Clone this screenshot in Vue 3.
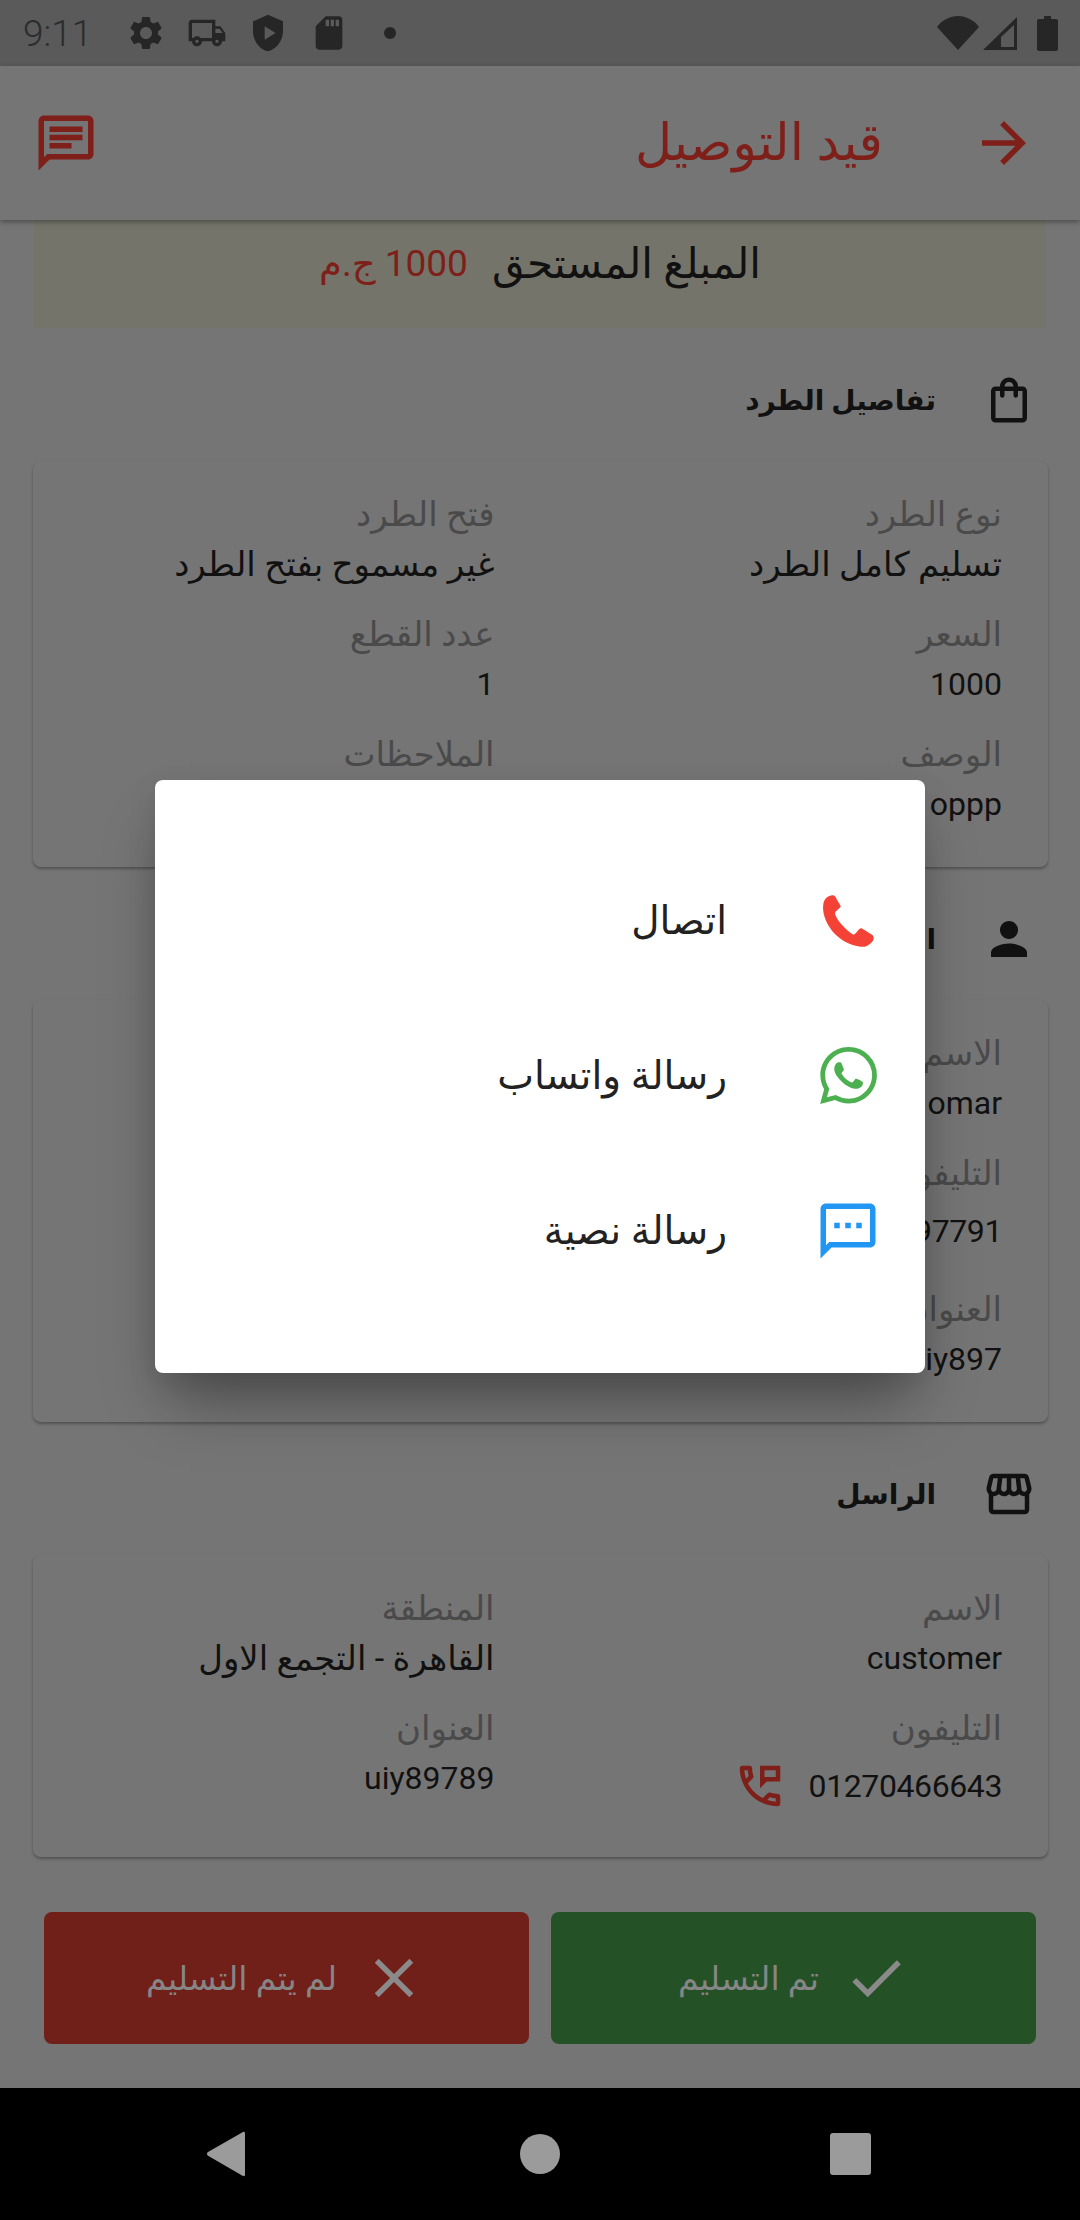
<script setup>
// colours are the dimmed ones as seen behind the dialog
const packageRows = [
  [
    { label: "نوع الطرد", value: "تسليم كامل الطرد" },
    { label: "فتح الطرد", value: "غير مسموح بفتح الطرد" },
  ],
  [
    { label: "السعر", value: "1000", latin: true },
    { label: "عدد القطع", value: "1", latin: true },
  ],
  [
    { label: "الوصف", value: "oppp", latin: true },
    { label: "الملاحظات", value: "-", latin: true },
  ],
];
const receiverRows = [
  [
    { label: "الاسم", value: "omar", latin: true },
    { label: "المنطقة", value: "القاهرة" },
  ],
  [
    { label: "التليفون", value: "01270497791", latin: true, phone: true },
    { label: "العنوان", value: "-", latin: true },
  ],
  [
    { label: "العنوان", value: "uiy897", latin: true },
    { label: "الملاحظات", value: "-", latin: true },
  ],
];
const senderRows = [
  [
    { label: "الاسم", value: "customer", latin: true },
    { label: "المنطقة", value: "القاهرة - التجمع الاول" },
  ],
  [
    { label: "التليفون", value: "01270466643", latin: true, phone: true },
    { label: "العنوان", value: "uiy89789", latin: true },
  ],
];
const sections = [
  { title: "تفاصيل الطرد", icon: "bag", rows: packageRows },
  { title: "المستلم", icon: "person", rows: receiverRows },
  { title: "الراسل", icon: "store", rows: senderRows },
];
const iconPaths = {
  bag: "M18 6h-2c0-2.21-1.79-4-4-4S8 3.79 8 6H6c-1.1 0-2 .9-2 2v12c0 1.1.9 2 2 2h12c1.1 0 2-.9 2-2V8c0-1.1-.9-2-2-2zm-6-2c1.1 0 2 .9 2 2h-4c0-1.1.9-2 2-2zm6 16H6V8h2v2c0 .55.45 1 1 1s1-.45 1-1V8h4v2c0 .55.45 1 1 1s1-.45 1-1V8h2v12z",
  person: "M12 12c2.21 0 4-1.79 4-4s-1.79-4-4-4-4 1.79-4 4 1.79 4 4 4zm0 2c-2.67 0-8 1.34-8 4v2h16v-2c0-2.66-5.33-4-8-4z",
  store: "M21.9 8.89l-1.05-4.37c-.22-.9-1-1.52-1.91-1.52H5.05c-.9 0-1.69.63-1.9 1.52L2.1 8.89c-.24 1.02-.02 2.06.62 2.88.08.11.19.19.28.29V19c0 1.1.9 2 2 2h14c1.1 0 2-.9 2-2v-6.94c.09-.09.2-.18.28-.28.64-.82.87-1.87.62-2.89zm-2.99-3.9l1.05 4.37c.1.42.01.84-.25 1.17-.14.18-.44.47-.94.47-.61 0-1.14-.49-1.21-1.14L16.98 5l1.93-.01zM13 5h1.96l.54 4.52c.05.39-.07.78-.33 1.07-.22.26-.54.41-.95.41-.67 0-1.22-.59-1.22-1.31V5zM8.49 9.52L9.04 5H11v4.69c0 .72-.55 1.31-1.29 1.31-.34 0-.65-.15-.89-.41-.25-.29-.37-.68-.33-1.07zm-4.45-.16L5.05 5h1.97l-.58 4.86c-.08.65-.6 1.14-1.21 1.14-.49 0-.8-.29-.93-.47-.27-.32-.36-.75-.26-1.17zM5 19v-6.03c.08.01.15.03.23.03.87 0 1.66-.36 2.24-.95.6.6 1.4.95 2.31.95.87 0 1.65-.36 2.23-.93.59.57 1.39.93 2.29.93.84 0 1.64-.35 2.24-.95.58.59 1.37.95 2.24.95.08 0 .15-.02.23-.03V19H5z",
};
const phoneMsg = "M20 15.5c-1.25 0-2.45-.2-3.57-.57-.1-.03-.21-.05-.31-.05-.26 0-.51.1-.71.29l-2.2 2.2c-2.83-1.44-5.15-3.75-6.59-6.59l2.2-2.21c.28-.26.36-.65.25-1C8.7 6.45 8.5 5.25 8.5 4c0-.55-.45-1-1-1H4c-.55 0-1 .45-1 1 0 9.39 7.61 17 17 17 .55 0 1-.45 1-1v-3.5c0-.55-.45-1-1-1zM5.03 5h1.5c.07.89.22 1.76.46 2.59l-1.2 1.2c-.41-1.2-.67-2.47-.76-3.79zM19 18.97c-1.32-.09-2.59-.35-3.8-.75l1.2-1.2c.85.24 1.72.39 2.6.45v1.5zM12 3v10l3-3h6V3h-9zm7 5h-5V5h5v3z";
</script>

<template>
  <div class="screen" dir="rtl">
    <div class="status-bar" dir="ltr">
      <span class="clock">9:11</span>
      <svg class="st-icon" viewBox="0 0 24 24"><path d="M19.14 12.94c.04-.3.06-.61.06-.94 0-.32-.02-.64-.07-.94l2.03-1.58c.18-.14.23-.41.12-.61l-1.92-3.32c-.12-.22-.37-.29-.59-.22l-2.39.96c-.5-.38-1.03-.7-1.62-.94l-.36-2.54c-.04-.24-.24-.41-.48-.41h-3.84c-.24 0-.43.17-.47.41l-.36 2.54c-.59.24-1.13.57-1.62.94l-2.39-.96c-.22-.08-.47 0-.59.22L2.74 8.87c-.12.21-.08.47.12.61l2.03 1.58c-.05.3-.09.63-.09.94s.02.64.07.94l-2.03 1.58c-.18.14-.23.41-.12.61l1.92 3.32c.12.22.37.29.59.22l2.39-.96c.5.38 1.03.7 1.62.94l.36 2.54c.05.24.24.41.48.41h3.84c.24 0 .44-.17.47-.41l.36-2.54c.59-.24 1.13-.56 1.62-.94l2.39.96c.22.08.47 0 .59-.22l1.92-3.32c.12-.22.07-.47-.12-.61l-2.01-1.58zM12 15.6c-1.98 0-3.6-1.62-3.6-3.6s1.62-3.6 3.6-3.6 3.6 1.62 3.6 3.6-1.62 3.6-3.6 3.6z" /></svg>
      <svg class="st-icon" viewBox="0 0 24 24"><path d="M20 8h-3V4H3c-1.1 0-2 .9-2 2v11h2c0 1.66 1.34 3 3 3s3-1.34 3-3h6c0 1.66 1.34 3 3 3s3-1.34 3-3h2v-5l-3-4zm-.5 1.5l1.96 2.5H17V9.5h2.5zM6 18c-.55 0-1-.45-1-1s.45-1 1-1 1 .45 1 1-.45 1-1 1zm2.22-3c-.55-.61-1.33-1-2.22-1s-1.67.39-2.22 1H3V6h12v9H8.22zM18 18c-.55 0-1-.45-1-1s.45-1 1-1 1 .45 1 1-.45 1-1 1z" /></svg>
      <svg class="st-icon" viewBox="0 0 24 24"><path fill-rule="evenodd" d="M12 1L3 5v6c0 5.55 3.84 10.74 9 12 5.16-1.26 9-6.45 9-12V5l-9-4zm-2 7v8l6.5-4L10 8z" /></svg>
      <svg class="st-icon" viewBox="0 0 24 24"><path d="M18 2h-8L4.02 8 4 20c0 1.1.9 2 2 2h12c1.1 0 2-.9 2-2V4c0-1.1-.9-2-2-2zm-6 6h-2V4h2v4zm3 0h-2V4h2v4zm3 0h-2V4h2v4z" /></svg>
      <span class="st-dot"></span>
      <span class="st-spacer"></span>
      <svg class="st-wifi" viewBox="0 0 42 34"><path d="M0 11C5 4 13 0 21 0s16 4 21 11L21 34z" /></svg>
      <svg class="st-signal" viewBox="0 0 34 33"><path fill-rule="evenodd" d="M0 33L34 0v33H0zM18 20v10h13V8z" /></svg>
      <svg class="st-battery" viewBox="0 0 21 35"><path d="M7 0h7v3h5c1.1 0 2 .9 2 2v28c0 1.1-.9 2-2 2H2c-1.100 0-2-.9-2-2V5c0-1.100.9-2 2-2h5z" /></svg>
    </div>

    <header class="app-bar">
      <svg class="bar-icon" viewBox="0 0 24 24"><path d="M12 4l-1.41 1.41L16.17 11H4v2h12.17l-5.58 5.59L12 20l8-8z" /></svg>
      <h1 class="bar-title">قيد التوصيل</h1>
      <svg class="bar-icon" viewBox="0 0 24 24"><path d="M20 2H4c-1.1 0-1.99.9-1.99 2L2 22l4-4h14c1.1 0 2-.9 2-2V4c0-1.1-.9-2-2-2zm0 14H5.17L4 17.17V4h16v12zM6 12h8v2H6zm0-3h12v2H6zm0-3h12v2H6z" /></svg>
    </header>

    <main class="content">
      <div class="amount">
        <span class="amount-label">المبلغ المستحق</span>
        <span class="amount-value">1000 ج.م</span>
      </div>

      <section v-for="s in sections" :key="s.title" class="section">
        <div class="section-head">
          <svg class="head-icon" viewBox="0 0 24 24"><path :d="iconPaths[s.icon]" /></svg>
          <h2 class="head-title">{{ s.title }}</h2>
        </div>
        <div class="card">
          <div v-for="(row, i) in s.rows" :key="i" class="card-row">
            <div v-for="cell in row" :key="cell.label" class="cell">
              <div class="cell-label">{{ cell.label }}</div>
              <div v-if="cell.phone" class="cell-phone">
                <span class="cell-value latin phone-number">{{ cell.value }}</span>
                <svg class="phone-icon" viewBox="0 0 24 24"><path :d="phoneMsg" /></svg>
              </div>
              <div v-else class="cell-value" :class="{ latin: cell.latin }">{{ cell.value }}</div>
            </div>
          </div>
        </div>
      </section>

      <div class="actions">
        <button class="action done">
          <svg class="action-icon" viewBox="0 0 24 24"><path d="M9 16.17L4.83 12l-1.42 1.41L9 19 21 7l-1.41-1.41z" /></svg>
          <span>تم التسليم</span>
        </button>
        <button class="action failed">
          <svg class="action-icon" viewBox="0 0 24 24"><path d="M19 6.41L17.59 5 12 10.59 6.41 5 5 6.41 10.59 12 5 17.59 6.41 19 12 13.41 17.59 19 19 17.59 13.41 12z" /></svg>
          <span>لم يتم التسليم</span>
        </button>
      </div>
    </main>

    <nav class="nav-bar" dir="ltr">
      <svg class="nav-back" viewBox="0 0 38 46"><path d="M36 1L1 21c-1.300.9-1.300 2.900 0 3.800l35 20.200c1 .5 2-.2 2-1.300V2.300C38 1.200 37 .5 36 1z" /></svg>
      <span class="nav-home"></span>
      <span class="nav-recent"></span>
    </nav>

    <div class="dialog">
      <div class="dialog-row">
        <span class="dialog-icon">
          <svg width="56" height="56" viewBox="60 65 168 168"><path fill="#f44336" d="M70 98C72 84 84 72 98 72c6 0 10 6 12 12l12 20c2 6-18 14-17 24 7 22 35 50 55 62 10 0 14-20 25-19l31 19c8 6 6 16-2 24-10 10-22 14-32 12-32-4-64-21-86-48C76 152 66 122 70 98z" /></svg>
        </span>
        <span class="dialog-text">اتصال</span>
      </div>
      <div class="dialog-row">
        <span class="dialog-icon">
          <svg width="57" height="57" viewBox="0 0 24 24"><path fill="#4caf50" d="M17.472 14.382c-.297-.149-1.758-.867-2.03-.967-.273-.099-.471-.148-.67.15-.197.297-.767.966-.94 1.164-.173.199-.347.223-.644.075-.297-.15-1.255-.463-2.39-1.475-.883-.788-1.48-1.761-1.653-2.059-.173-.297-.018-.458.13-.606.134-.133.298-.347.446-.52.149-.174.198-.298.298-.497.099-.198.05-.371-.025-.52-.075-.149-.669-1.612-.916-2.207-.242-.579-.487-.5-.669-.51-.173-.008-.371-.01-.57-.01-.198 0-.52.074-.792.372-.272.297-1.04 1.016-1.04 2.479 0 1.462 1.065 2.875 1.213 3.074.149.198 2.096 3.2 5.077 4.487.709.306 1.262.489 1.694.625.712.227 1.36.195 1.871.118.571-.085 1.758-.719 2.006-1.413.248-.694.248-1.289.173-1.413-.074-.124-.272-.198-.57-.347m-5.421 7.403h-.004a9.87 9.87 0 01-5.031-1.378l-.361-.214-3.741.982.998-3.648-.235-.374a9.86 9.86 0 01-1.51-5.26c.001-5.45 4.436-9.884 9.888-9.884 2.64 0 5.122 1.03 6.988 2.898a9.825 9.825 0 012.893 6.994c-.003 5.45-4.437 9.884-9.885 9.884m8.413-18.297A11.815 11.815 0 0012.05 0C5.495 0 .16 5.335.157 11.892c0 2.096.547 4.142 1.588 5.945L.057 24l6.305-1.654a11.882 11.882 0 005.683 1.448h.005c6.554 0 11.89-5.335 11.893-11.893a11.821 11.821 0 00-3.48-8.413z" /></svg>
        </span>
        <span class="dialog-text">رسالة واتساب</span>
      </div>
      <div class="dialog-row">
        <span class="dialog-icon">
          <svg width="66" height="66" viewBox="0 0 24 24"><path fill="#2196f3" d="M20 2H4c-1.100 0-1.990.9-1.990 2L2 22l4-4h14c1.100 0 2-.9 2-2V4c0-1.100-.9-2-2-2zm0 14H5.170L4 17.170V4h16v12zM7 9h2v2H7zm4 0h2v2h-2zm4 0h2v2h-2z" /></svg>
        </span>
        <span class="dialog-text">رسالة نصية</span>
      </div>
    </div>
  </div>
</template>

<style scoped>
.screen {
  position: relative;
  width: 1080px;
  height: 2220px;
  display: flex;
  flex-direction: column;
  overflow: hidden;
  background: #757575;
  color: #111;
  font-family: Roboto, "DejaVu Sans", sans-serif;
}

.status-bar {
  height: 66px;
  flex: none;
  display: flex;
  align-items: center;
  padding: 0 22px 0 23px;
  background: #5a5a5a;
}
.clock {
  width: 103px;
  font-size: 37px;
  font-weight: 300;
  color: #2c2c2c;
}
.st-icon {
  width: 40px;
  height: 40px;
  margin-left: 21px;
  fill: #262626;
}
.st-icon:first-of-type {
  margin-left: 0;
}
.st-dot {
  width: 12px;
  height: 12px;
  margin-left: 35px;
  border-radius: 50%;
  background: #262626;
}
.st-spacer {
  flex: 1;
}
.st-wifi {
  width: 42px;
  height: 34px;
  fill: #262626;
}
.st-signal {
  width: 34px;
  height: 33px;
  margin-left: 4px;
  fill: #262626;
}
.st-battery {
  width: 21px;
  height: 35px;
  margin-left: 20px;
  fill: #262626;
}

.app-bar {
  position: relative;
  z-index: 1;
  height: 154px;
  flex: none;
  display: flex;
  align-items: center;
  padding: 0 43px 0 33px;
  background: #757575;
  box-shadow: 0 2px 5px rgba(0, 0, 0, 0.35);
}
.bar-icon {
  width: 66px;
  height: 66px;
  fill: #7e1f19;
}
.bar-title {
  flex: 1;
  margin: 0 88px 0 0;
  font-size: 51px;
  font-weight: 400;
  line-height: 66px;
  color: #7e1f19;
}

.content {
  flex: 1;
  min-height: 0;
}

.amount {
  height: 86px;
  padding-bottom: 22px;
  margin: 0 34px;
  display: flex;
  align-items: center;
  justify-content: center;
  gap: 24px;
  background: #74746a;
  font-size: 42px;
}
.amount-value {
  font-size: 37px;
  color: #7e1f19;
}

.section-head {
  height: 54px;
  margin-top: 45px;
  padding-right: 44px;
  display: flex;
  align-items: center;
  gap: 46px;
}
.head-icon {
  width: 54px;
  height: 54px;
  fill: #111;
}
.head-title {
  margin: 0;
  font-size: 28px;
  font-weight: 700;
}

.card {
  margin: 34px 32px 0 33px;
  padding: 28px 0 38px;
  display: flex;
  flex-direction: column;
  gap: 20px;
  border-radius: 8px;
  background: #757575;
  box-shadow: 0 2px 3px rgba(0, 0, 0, 0.3);
}
.card-row {
  display: grid;
  grid-template-columns: 1fr 1fr;
}
.cell {
  padding-right: 46px;
}
.cell-label {
  height: 50px;
  line-height: 50px;
  font-size: 34px;
  color: #4a4a4a;
}
.cell-value {
  height: 50px;
  line-height: 50px;
  font-size: 34px;
  color: #111;
  white-space: nowrap;
}
.cell-value.latin {
  font-size: 32px;
}
.phone-number {
  letter-spacing: -0.4px;
}
.cell-phone {
  height: 66px;
  display: flex;
  align-items: center;
  gap: 22px;
}
.phone-icon {
  width: 54px;
  height: 54px;
  fill: #7e1f19;
}

.actions {
  margin-top: 55px;
  padding: 0 44px;
  display: grid;
  grid-template-columns: 1fr 1fr;
  gap: 22px;
}
.action {
  height: 132px;
  display: flex;
  align-items: center;
  justify-content: center;
  gap: 24px;
  border: 0;
  border-radius: 8px;
  font: inherit;
  font-size: 33px;
  color: #868686;
}
.action.done {
  background: #255126;
}
.action.failed {
  background: #711f19;
}
.action-icon {
  width: 66px;
  height: 66px;
  fill: #8a8a8a;
}

.nav-bar {
  height: 132px;
  flex: none;
  position: relative;
  display: flex;
  align-items: center;
  padding-left: 207px;
  background: #000;
}
.nav-back {
  width: 38px;
  height: 46px;
  fill: #9b9b9b;
}
.nav-home {
  width: 40px;
  height: 40px;
  margin-left: 275px;
  border-radius: 50%;
  background: #9b9b9b;
}
.nav-recent {
  width: 41px;
  height: 42px;
  margin-left: 270px;
  border-radius: 3px;
  background: #9b9b9b;
}

.dialog {
  position: absolute;
  z-index: 2;
  top: 780px;
  left: 155px;
  width: 770px;
  height: 593px;
  box-sizing: border-box;
  padding: 63px 44px 0 0;
  border-radius: 8px;
  background: #fff;
  box-shadow: 0 40px 60px -14px rgba(0, 0, 0, 0.35), 0 10px 30px rgba(0, 0, 0, 0.1);
}
.dialog-row {
  height: 155px;
  display: flex;
  align-items: center;
  gap: 88px;
}
.dialog-icon {
  width: 66px;
  height: 66px;
  display: flex;
  align-items: center;
  justify-content: center;
}
.dialog-text {
  font-size: 39px;
  color: #222;
}
</style>

<style>
html,
body {
  margin: 0;
  background: #000;
}
</style>
